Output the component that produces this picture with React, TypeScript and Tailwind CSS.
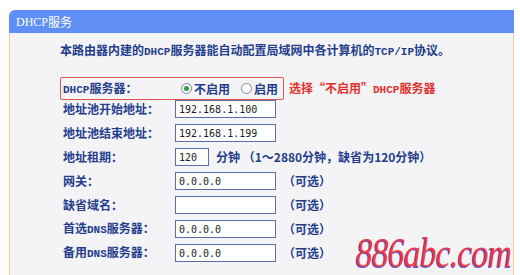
import React from "react";

const cjk = "font-['Noto_Sans_CJK_SC',sans-serif]";

// Latin inside Chinese text: narrow half-width look
const L = ({ children }: { children: React.ReactNode }) => (
  <span className="font-['Liberation_Mono',monospace] text-[11px] font-bold">{children}</span>
);

const Radio = ({ checked }: { checked?: boolean }) => (
  <span className="relative inline-flex h-[11px] w-[11px] items-center justify-center rounded-full border border-[#7d8593] bg-white">
    {checked && <span className="h-[5px] w-[5px] rounded-full bg-[#2f9e3f]" />}
  </span>
);

const Field = ({ value, w = "w-[101px]" }: { value: string; w?: string }) => (
  <div
    className={`${w} flex h-[18px] items-center border border-[#5b6fa6] bg-white pl-[3px] font-['DejaVu_Sans_Mono',monospace] text-[10px] font-normal text-[#1b1b1b]`}
  >
    {value}
  </div>
);

const Optional = () => <span className="ml-[7px]">（可选）</span>;

const Row = ({ label, children }: { label: React.ReactNode; children: React.ReactNode }) => (
  <div className="flex h-6 items-center">
    <div className="w-[115px] pl-[3px]">{label}</div>
    {children}
  </div>
);

export default function App() {
  return (
    <div className={`h-[275px] w-[520px] overflow-hidden bg-white pl-[9px] pt-[10px] ${cjk}`}>
      <div className="relative flex h-[265px] w-[505px] flex-col">
        {/* header */}
        <div className="flex h-[23px] items-center rounded-tl-[6px] bg-[#5f8ff4] pl-[7px] text-[12px] text-white">
          <span className="font-['Liberation_Serif',serif] text-[12px]">DHCP</span>
          <span>服务</span>
        </div>

        {/* body */}
        <div className="flex-1 border-x border-[#f3c98f] bg-[#f4f4f6] pl-[50px] text-[12px] font-semibold text-[#243d8c]">
          <p className="pt-[9px] leading-4">
            本路由器内建的<L>DHCP</L>服务器能自动配置局域网中各计算机的<L>TCP/IP</L>协议。
          </p>

          <div className="mt-[17px] flex items-center">
            <div className="w-[224px] rounded-[2px] border-[1.5px] border-[#e0564f]">
              <div className="flex h-[21px] items-center">
                <div className="w-[115px] pl-[2px]">
                  <L>DHCP</L>服务器：
                </div>
                <div className="ml-[5px] flex items-center">
                  <Radio checked />
                  <span className="ml-[2px]">不启用</span>
                  <span className="ml-[11px]" />
                  <Radio />
                  <span className="ml-[2px]">启用</span>
                </div>
              </div>
            </div>
            <span className="ml-[5px] text-[#e3302a]">
              选择“不启用”<L>DHCP</L>服务器
            </span>
          </div>

          <div className="-mt-[3px]">
            <Row label="地址池开始地址：">
              <Field value="192.168.1.100" />
            </Row>
            <Row label="地址池结束地址：">
              <Field value="192.168.1.199" />
            </Row>
            <Row label="地址租期：">
              <Field value="120" w="w-[34px]" />
              <span className="ml-[7px]">分钟 （1～2880分钟，缺省为120分钟）</span>
            </Row>
            <Row label="网关：">
              <Field value="0.0.0.0" />
              <Optional />
            </Row>
            <Row label="缺省域名：">
              <Field value="" />
              <Optional />
            </Row>
            <Row
              label={
                <>
                  首选<L>DNS</L>服务器：
                </>
              }
            >
              <Field value="0.0.0.0" />
              <Optional />
            </Row>
            <Row
              label={
                <>
                  备用<L>DNS</L>服务器：
                </>
              }
            >
              <Field value="0.0.0.0" />
              <Optional />
            </Row>
          </div>
        </div>

        {/* watermark */}
        <div className="absolute bottom-[2px] right-[3px] origin-right scale-x-[0.8] font-['Liberation_Serif',serif] text-[42px] italic leading-[40px] tracking-[-1px] text-[#f0383f] [text-shadow:-1px_1px_0_#4a5bf0]">
          886abc.com
        </div>
      </div>
    </div>
  );
}
